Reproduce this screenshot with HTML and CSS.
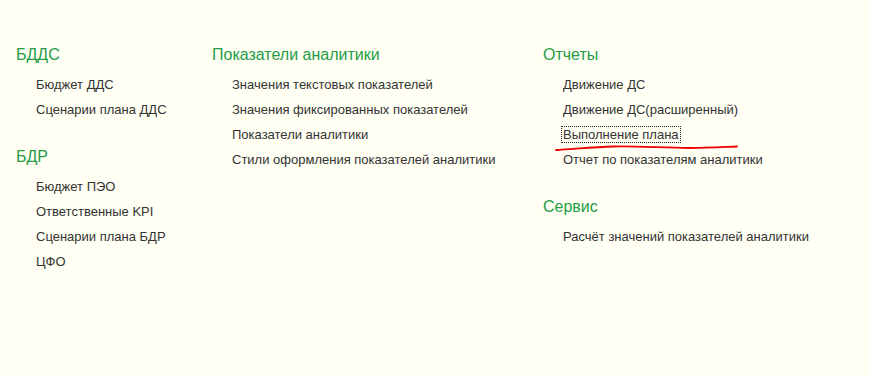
FILE: index.html
```html
<!DOCTYPE html>
<html lang="ru">
<head>
    <meta charset="UTF-8">
    <meta name="viewport" content="width=device-width, initial-scale=1.0">
    <title>Бюджетирование</title>
    <link rel="stylesheet" href="styles.css">
</head>
<body>

    <div class="panel">
        <div class="column">
            <div class="group">
                <h3>БДДС</h3>
                <ul>
                    <li><a href="#">Бюджет ДДС</a></li>
                    <li><a href="#">Сценарии плана ДДС</a></li>
                </ul>
            </div>
            <div class="group">
                <h3>БДР</h3>
                <ul>
                    <li><a href="#">Бюджет ПЭО</a></li>
                    <li><a href="#">Ответственные KPI</a></li>
                    <li><a href="#">Сценарии плана БДР</a></li>
                    <li><a href="#">ЦФО</a></li>
                </ul>
            </div>
        </div>

        <div class="column">
            <div class="group">
                <h3>Показатели аналитики</h3>
                <ul>
                    <li><a href="#">Значения текстовых показателей</a></li>
                    <li><a href="#">Значения фиксированных показателей</a></li>
                    <li><a href="#">Показатели аналитики</a></li>
                    <li><a href="#">Стили оформления показателей аналитики</a></li>
                </ul>
            </div>
        </div>

        <div class="column">
            <div class="group">
                <h3>Отчеты</h3>
                <ul>
                    <li><a href="#">Движение ДС</a></li>
                    <li><a href="#">Движение ДС(расширенный)</a></li>
                    <li><a href="#" class="current">Выполнение плана</a></li>
                    <li><a href="#">Отчет по показателям аналитики</a></li>
                </ul>
            </div>
            <div class="group">
                <h3>Сервис</h3>
                <ul>
                    <li><a href="#">Расчёт значений показателей аналитики</a></li>
                </ul>
            </div>
        </div>
    </div>

    <!-- пометка красным под "Выполнение плана" -->
    <svg class="mark" width="186" height="10" viewBox="0 0 186 10">
        <path d="M2 7 C 20 6, 40 4, 60 3.5 C 85 3, 110 5, 135 5 C 155 5, 170 4, 183 3.5" fill="none" stroke="#f00000" stroke-width="1.8" stroke-linecap="round"/>
    </svg>

</body>
</html>
```

FILE: styles.css
```css
* {
    box-sizing: border-box;
    margin: 0;
    padding: 0;
    font-family: "Liberation Sans", Arial, sans-serif;
}

body {
    background-color: #fffff3;
    color: #333;
    padding: 45px 0 0 16px;
    position: relative;
    min-height: 376px;
}

.panel {
    display: grid;
    grid-template-columns: 196px 331px auto;
}

.group + .group {
    margin-top: 25px;
}

h3 {
    font-size: 16px;
    font-weight: normal;
    line-height: 20px;
    color: #259c48;
    margin-bottom: 7px;
}

ul {
    list-style: none;
    padding-left: 20px;
}

li {
    font-size: 13px;
    line-height: 25px;
    white-space: nowrap;
}

li a {
    color: #333;
    text-decoration: none;
}

li a.current {
    outline: 1px dotted #222;
    padding: 0 1px;
    margin-left: -1px;
}

.mark {
    position: absolute;
    left: 554px;
    top: 143px;
}
```
